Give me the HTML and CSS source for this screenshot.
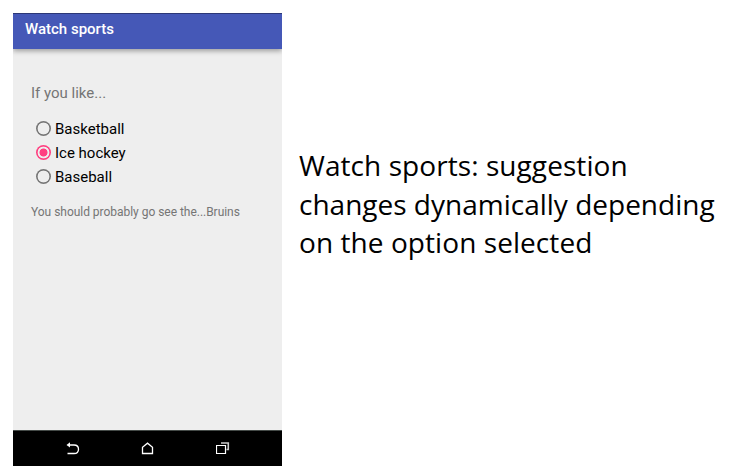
FILE: index.html
```html
<!DOCTYPE html>
<html lang="en">
<head>
<meta charset="utf-8">
<title>Watch sports</title>
<link rel="stylesheet" href="styles.css">
</head>
<body>
<main class="slide">
  <section class="phone">
    <header class="app-bar"><h1>Watch sports</h1></header>
    <div class="content">
      <p class="prompt">If you like...</p>
      <ul class="options">
        <li><span class="radio"></span><span class="label">Basketball</span></li>
        <li><span class="radio selected"></span><span class="label">Ice hockey</span></li>
        <li><span class="radio"></span><span class="label">Baseball</span></li>
      </ul>
      <p class="suggestion">You should probably go see the...Bruins</p>
    </div>
    <nav class="nav-bar">
      <svg width="14" height="14" viewBox="0 0 14 14"><path d="M3 3H8C11 3 12.5 5 12.5 7.2C12.5 10 10.5 11.5 8 11.5H1.5" fill="none" stroke="#fff" stroke-width="1.3"/><path d="M.5 3L4 .3V5.5Z" fill="#fff"/></svg>
      <svg width="14" height="14" viewBox="0 0 14 14"><path d="M1.5 11.5V5.2L6.5 1.2L11.5 5.2V11.5Z" fill="none" stroke="#fff" stroke-width="1.3"/></svg>
      <svg width="14" height="14" viewBox="0 0 14 14"><path d="M5 1H12.3V7.5H10.5" fill="none" stroke="#ccc" stroke-width="1.6"/><path d="M.5 3.5H9.5V11.5H.5Z" fill="none" stroke="#fff" stroke-width="1.2"/></svg>
    </nav>
  </section>
  <p class="caption">
    <span class="line first">Watch sports: suggestion</span>
    <span class="line">changes dynamically depending</span>
    <span class="line third">on the option selected</span>
  </p>
</main>
</body>
</html>
```
FILE: styles.css
```css
* { box-sizing: border-box; }
body, h1, p, ul { margin: 0; padding: 0; }
body { background: #fff; overflow: hidden; }
.slide {
  display: flex;
  width: 731px;
  height: 474px;
  padding: 13px 0 0 13px;
}
.phone {
  display: flex;
  flex-direction: column;
  width: 269px;
  height: 453px;
  background: #eee;
  font-family: Roboto, sans-serif;
}
.app-bar {
  height: 36px;
  padding: 6px 12px 0;
  background: #4558b7;
  border-top: 1px solid #2c3777;
  box-shadow: 0 2px 5px rgba(0, 0, 0, .35);
  clip-path: inset(0 0 -10px 0);
}
.app-bar h1 {
  color: #fff;
  font-size: 15px;
  line-height: 18px;
  font-weight: 500;
}
.content { flex: 1; padding: 34px 18px 0; }
.prompt { color: #757575; font-size: 15px; line-height: 20px; }
.options { list-style: none; margin-top: 14px; }
.options li { display: flex; align-items: center; height: 24px; padding-left: 5px; }
.radio {
  width: 15px;
  height: 15px;
  margin: -1px 4px 0 0;
  border-radius: 50%;
  background: radial-gradient(circle, transparent 5.6px, #777 6.2px);
}
.radio.selected {
  background: radial-gradient(circle, #ff4081 3.6px, transparent 4.4px, transparent 5.6px, #ff4081 6.2px);
}
.label { color: #000; font-size: 15px; line-height: 24px; }
.suggestion { margin-top: 14px; color: #757575; font-size: 12px; line-height: 18px; letter-spacing: -.03px; white-space: nowrap; }
.nav-bar {
  display: flex;
  justify-content: space-between;
  height: 36px;
  padding: 11px 52px 0 53px;
  background: #000;
  border-top: 1px solid #454b48;
}
.nav-bar svg { display: block; }
.caption {
  width: 430px;
  padding: 133px 0 0 17px;
  color: #000;
  font-family: "Open Sans", sans-serif;
  font-size: 28px;
  font-stretch: 90%;
  line-height: 38.5px;
}
.line { display: block; white-space: nowrap; }
.first, .third { letter-spacing: .07px; }
```
